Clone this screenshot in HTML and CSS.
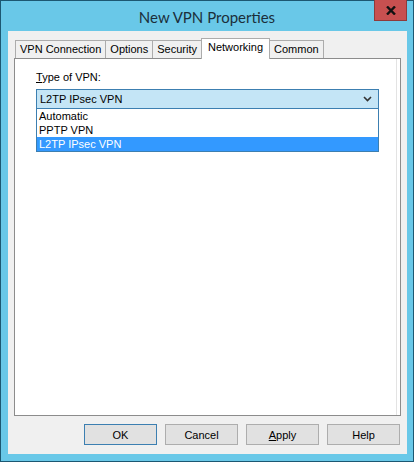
FILE: index.html
```html
<!DOCTYPE html>
<html lang="en">
<head>
    <meta charset="UTF-8">
    <title>New VPN Properties</title>
    <link rel="stylesheet" href="styles.css">
</head>
<body>
    <div class="window">
        <div class="titlebar">
            <span class="title">New VPN Properties</span>
            <button class="close-btn" aria-label="Close">
                <svg width="10" height="9" viewBox="0 0 10 9"><path d="M1 0.5 L9 8.5 M9 0.5 L1 8.5" stroke="#111" stroke-width="2.4"/></svg>
            </button>
        </div>
        <div class="client">
            <div class="tabs">
                <div class="tab">VPN Connection</div>
                <div class="tab">Options</div>
                <div class="tab">Security</div>
                <div class="tab active">Networking</div>
                <div class="tab">Common</div>
            </div>
            <div class="panel">
                <div class="field-label"><u>T</u>ype of VPN:</div>
                <div class="combo">
                    <div class="combo-box">
                        <span>L2TP IPsec VPN</span>
                        <svg width="9" height="6" viewBox="0 0 9 6"><path d="M1 1 L4.5 4.5 L8 1" fill="none" stroke="#333" stroke-width="1.6"/></svg>
                    </div>
                    <ul class="combo-list">
                        <li>Automatic</li>
                        <li>PPTP VPN</li>
                        <li class="selected">L2TP IPsec VPN</li>
                    </ul>
                </div>
            </div>
            <div class="buttons">
                <button class="btn default">OK</button>
                <button class="btn">Cancel</button>
                <button class="btn"><u>A</u>pply</button>
                <button class="btn">Help</button>
            </div>
        </div>
    </div>
</body>
</html>
```

FILE: styles.css
```css
body { margin: 0; font-family: "Liberation Sans", Arial, sans-serif; font-size: 11px; color: #000; }
.window { width: 414px; height: 462px; box-sizing: border-box; border: 1px solid #1c5872; background: #69c8e8; display: flex; flex-direction: column; }
.titlebar { height: 30px; position: relative; display: flex; justify-content: center; align-items: center; }
.title { font-family: Lato, sans-serif; font-size: 15px; color: #1b2f3a; margin-top: 1px; }
.close-btn { position: absolute; top: -1px; right: 6px; width: 33px; height: 21px; background: #c75050; border: 1px solid #8f3a3a; border-top: none; padding: 0; display: flex; align-items: center; justify-content: center; }
.client { flex: 1; margin: 0 6px 7px 7px; background: #f0f0f0; padding: 7px 6px 0 6px; display: flex; flex-direction: column; }
.tabs { display: flex; padding-left: 1px; height: 20px; align-items: flex-end; position: relative; z-index: 1; }
.tab { height: 18px; box-sizing: border-box; border: 1px solid #acacac; border-bottom: none; margin-right: -1px; padding: 0 4px; line-height: 17px; background: #f0f0f0; }
.tab.active { height: 21px; margin-bottom: -1px; background: #fff; padding: 0 6px; line-height: 16px; }
.panel { height: 358px; box-sizing: border-box; border: 1px solid #8c8c8c; background: #fff; box-shadow: inset -3px 0 0 #fff, inset -4px 0 0 #e3e3e3; padding: 11px 21px 0 21px; }
.field-label { height: 14px; line-height: 14px; margin-bottom: 5px; }
.combo-box { height: 20px; box-sizing: border-box; border: 1px solid #3c7fb1; background: #c4e5f6; display: flex; justify-content: space-between; align-items: center; padding: 0 6px 0 3px; }
.combo-list { list-style: none; margin: 0; padding: 0; border: 1px solid #3c7fb1; border-top: none; background: #fff; }
.combo-list li { height: 14px; line-height: 14px; padding-left: 2px; }
.combo-list li.selected { background: #3399ff; color: #fff; }
.buttons { display: flex; justify-content: flex-end; gap: 8px; margin-top: 8px; padding-right: 1px; }
.btn { width: 73px; height: 21px; font-family: inherit; font-size: 11px; background: #e1e1e1; border: 1px solid #adadad; padding: 0; color: #000; }
.btn.default { border-color: #3c7fb1; }
```
